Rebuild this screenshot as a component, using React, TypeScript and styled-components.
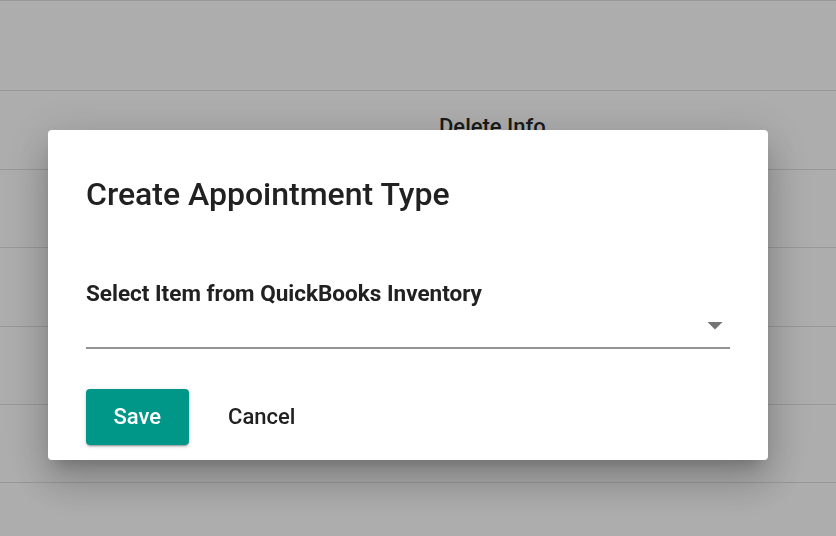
import React from "react";
import styled, { createGlobalStyle } from "styled-components";

const Global = createGlobalStyle`
  html, body { margin: 0; padding: 0; background: #fff; }
  body { font-family: Roboto, "Liberation Sans", sans-serif; overflow: hidden; }
  * { box-sizing: border-box; }
`;

const Page = styled.div`
  width: 836px;
  height: 536px;
  border-top: 1px solid #e0e0e0;
`;

const Row = styled.div<{ $h: number }>`
  height: ${(p) => p.$h}px;
  border-bottom: 1px solid #e0e0e0;
  display: flex;
  align-items: flex-start;
`;

const HeaderCell = styled.div`
  margin-left: 439px;
  padding-top: 23px;
  font-size: 22px;
  line-height: 26px;
  font-weight: 500;
  color: rgba(0, 0, 0, 0.87);
`;

const Overlay = styled.div`
  position: fixed;
  inset: 0;
  background: rgba(0, 0, 0, 0.32);
  display: flex;
  align-items: flex-start;
  padding: 130px 0 0 48px;
`;

const Dialog = styled.div`
  width: 720px;
  height: 330px;
  background: #fff;
  border-radius: 4px;
  box-shadow: 0px 11px 15px -7px rgba(0, 0, 0, 0.2),
    0px 24px 38px 3px rgba(0, 0, 0, 0.14), 0px 9px 46px 8px rgba(0, 0, 0, 0.12);
  padding: 44px 38px 14px 38px;
  display: flex;
  flex-direction: column;
`;

const Title = styled.h2`
  margin: 0;
  font-size: 32px;
  line-height: 40px;
  font-weight: 500;
  color: #212121;
`;

const Field = styled.div`
  margin-top: 66px;
  display: flex;
  flex-direction: column;
`;

const Label = styled.label`
  font-size: 22.5px;
  line-height: 26px;
  font-weight: 700;
  color: #212121;
`;

const SelectBox = styled.div`
  height: 43px;
  border-bottom: 2px solid rgba(0, 0, 0, 0.42);
  display: flex;
  align-items: center;
  justify-content: flex-end;
  padding-right: 7px;
  padding-bottom: 1px;
`;

const Actions = styled.div`
  margin-top: 40px;
  display: flex;
  align-items: center;
  gap: 12px;
`;

const Button = styled.button<{ $primary?: boolean }>`
  height: 56px;
  padding: 0 27.5px 2px;
  border: none;
  border-radius: 4px;
  font-family: Roboto, "Liberation Sans", sans-serif;
  font-size: 22px;
  font-weight: 500;
  cursor: pointer;
  background: ${(p) => (p.$primary ? "#009688" : "transparent")};
  color: ${(p) => (p.$primary ? "#fff" : "#212121")};
  box-shadow: ${(p) =>
    p.$primary
      ? "0px 3px 1px -2px rgba(0,0,0,0.2), 0px 2px 2px 0px rgba(0,0,0,0.14), 0px 1px 5px 0px rgba(0,0,0,0.12)"
      : "none"};
`;

export default function App() {
  return (
    <>
      <Global />
      <Page>
        <Row $h={90} />
        <Row $h={79}>
          <HeaderCell>Delete Info</HeaderCell>
        </Row>
        <Row $h={78} />
        <Row $h={79} />
        <Row $h={78} />
        <Row $h={78} />
      </Page>
      <Overlay>
        <Dialog>
          <Title>Create Appointment Type</Title>
          <Field>
            <Label>Select Item from QuickBooks Inventory</Label>
            <SelectBox>
              <svg width="16" height="8" viewBox="0 0 16 8">
                <path d="M0.5 0 L15.5 0 L8 7.5 Z" fill="rgba(0,0,0,0.54)" />
              </svg>
            </SelectBox>
          </Field>
          <Actions>
            <Button $primary>Save</Button>
            <Button>Cancel</Button>
          </Actions>
        </Dialog>
      </Overlay>
    </>
  );
}
